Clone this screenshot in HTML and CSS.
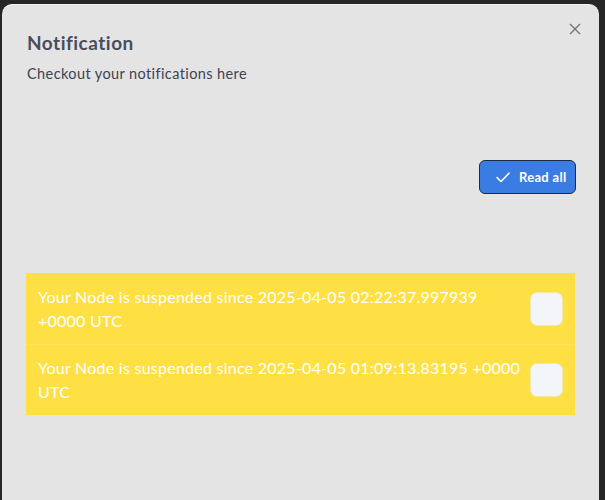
FILE: index.html
```html
<!DOCTYPE html>
<html>
<head>
<meta charset="utf-8">
<link rel="stylesheet" href="styles.css">
</head>
<body>
<div class="modal">
  <button class="close" aria-label="Close">
    <svg width="12" height="12" viewBox="0 0 12 12"><path d="M1 1L11 11M11 1L1 11" stroke="#6f7480" stroke-width="1.4" fill="none"/></svg>
  </button>
  <h1 class="title">Notification</h1>
  <p class="subtitle">Checkout your notifications here</p>
  <div class="actions">
    <button class="read-all">
      <svg width="14" height="11" viewBox="0 0 14 11"><path d="M1 5.5L5 9.5L13 1.2" stroke="#fff" stroke-width="1.6" fill="none" stroke-linecap="round" stroke-linejoin="round"/></svg>
      <span>Read all</span>
    </button>
  </div>
  <ul class="list">
    <li class="item">
      <span class="msg">Your Node is suspended since 2025-04-05 02:22:37.997939 +0000 UTC</span>
      <span class="check"></span>
    </li>
    <li class="item">
      <span class="msg">Your Node is suspended since 2025-04-05 01:09:13.83195 +0000 UTC</span>
      <span class="check"></span>
    </li>
  </ul>
</div>
</body>
</html>
```

FILE: styles.css
```css
html, body {
  margin: 0;
  padding: 0;
  background: #262626;
  height: 500px;
  overflow: hidden;
}
body {
  font-family: "Lato", "Noto Sans", sans-serif;
}
.modal {
  position: relative;
  margin: 4px 0 0 2px;
  width: 597px;
  height: 520px;
  box-sizing: border-box;
  background: #e4e4e4;
  border-radius: 10px 10px 0 0;
  border-top: 1px solid #f4f4f4;
  padding: 27px 23px 0 24px;
}
.close {
  position: absolute;
  top: 18px;
  right: 18px;
  background: none;
  border: 0;
  padding: 0;
  width: 12px;
  height: 12px;
  display: flex;
}
.title {
  margin: 0 0 0 1px;
  font-size: 19px;
  font-weight: 700;
  color: #484e5e;
  line-height: 22px;
  letter-spacing: 0.5px;
}
.subtitle {
  margin: 11px 0 0 1px;
  font-size: 14.5px;
  color: #3d4352;
  line-height: 18px;
  letter-spacing: 0.4px;
}
.actions {
  display: flex;
  justify-content: flex-end;
  margin-top: 77px;
}
.read-all {
  display: flex;
  align-items: center;
  gap: 9px;
  height: 34px;
  width: 97px;
  box-sizing: border-box;
  padding: 0 0 0 16px;
  background: #3a7ce2;
  border: 1px solid #1b2a48;
  border-radius: 6px;
  color: #fff;
  font-family: "Lato", sans-serif;
  font-weight: 700;
  font-size: 13px;
  letter-spacing: 0.3px;
}
.list {
  list-style: none;
  margin: 79px 1px 0 0;
  padding: 0;
  background: #fee044;
}
.item {
  display: flex;
  align-items: center;
  gap: 8px;
  height: 71px;
  box-sizing: border-box;
  padding: 0 12px 0 12px;
}
.item + .item {
  border-top: 1px solid #fde35c;
}
.msg {
  flex: 1;
  color: #fff;
  font-size: 16px;
  line-height: 24px;
  letter-spacing: 0.25px;
}
.check {
  width: 33px;
  height: 34px;
  flex: none;
  box-sizing: border-box;
  background: #f4f5f8;
  border: 1px solid #f1e8b0;
  border-radius: 7px;
}
```
